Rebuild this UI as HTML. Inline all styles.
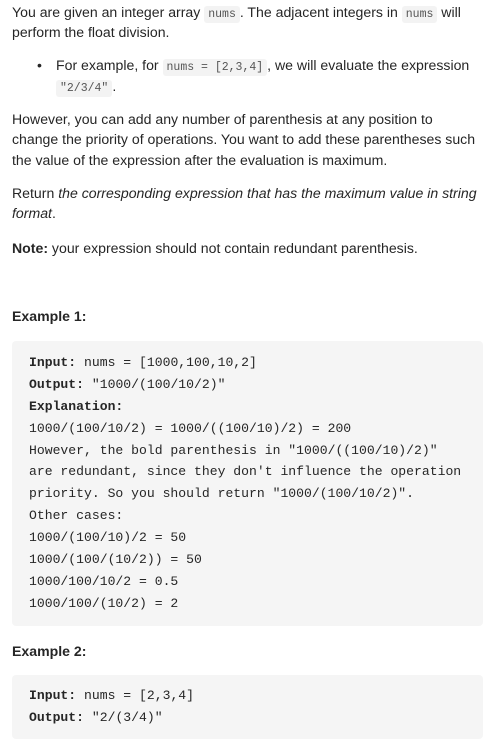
<!DOCTYPE html>
<html><head><meta charset="utf-8"><style>
body{margin:0;width:484px;height:740px;overflow:hidden;background:#fff;position:relative;font-family:"Liberation Sans",sans-serif;color:#262626;font-size:14.1px}
.l{position:absolute;white-space:nowrap;line-height:20px}
code{font-family:"Liberation Mono",monospace;font-size:11.5px;background:#f3f3f3;border-radius:3px;padding:2px 4px;color:#555}
.blk{position:absolute;left:12px;width:471px;background:#f5f5f5;border-radius:4px}
.m{position:absolute;left:29px;white-space:nowrap;font-family:"Liberation Mono",monospace;font-size:13.1px;line-height:22px;color:#262626}
b{font-weight:bold}
</style></head><body>
<div class="l" style="left:12px;top:2px">You are given an integer array <code>nums</code>. The adjacent integers in <code>nums</code> will</div>
<div class="l" style="left:12px;top:22px">perform the float division.</div>
<div class="l" style="left:37px;top:55px">•</div>
<div class="l" style="left:56px;top:55px">For example, for <code>nums = [2,3,4]</code>, we will evaluate the expression</div>
<div class="l" style="left:56px;top:76px"><code>"2/3/4"</code>.</div>
<div class="l" style="left:12px;top:109px">However, you can add any number of parenthesis at any position to</div>
<div class="l" style="left:12px;top:129px">change the priority of operations. You want to add these parentheses such</div>
<div class="l" style="left:12px;top:150px">the value of the expression after the evaluation is maximum.</div>
<div class="l" style="left:12px;top:183px">Return <i>the corresponding expression that has the maximum value in string</i></div>
<div class="l" style="left:12px;top:203px"><i>format</i>.</div>
<div class="l" style="left:12px;top:238px"><b>Note:</b> your expression should not contain redundant parenthesis.</div>
<div class="l" style="left:12px;top:306px"><b>Example 1:</b></div>
<div class="blk" style="top:341px;height:285px"></div>
<div class="m" style="top:352px"><b>Input:</b> nums = [1000,100,10,2]</div>
<div class="m" style="top:374px"><b>Output:</b> "1000/(100/10/2)"</div>
<div class="m" style="top:396px"><b>Explanation:</b></div>
<div class="m" style="top:418px">1000/(100/10/2) = 1000/((100/10)/2) = 200</div>
<div class="m" style="top:440px">However, the bold parenthesis in "1000/((100/10)/2)"</div>
<div class="m" style="top:461px">are redundant, since they don't influence the operation</div>
<div class="m" style="top:483px">priority. So you should return "1000/(100/10/2)".</div>
<div class="m" style="top:505px">Other cases:</div>
<div class="m" style="top:527px">1000/(100/10)/2 = 50</div>
<div class="m" style="top:549px">1000/(100/(10/2)) = 50</div>
<div class="m" style="top:571px">1000/100/10/2 = 0.5</div>
<div class="m" style="top:593px">1000/100/(10/2) = 2</div>
<div class="l" style="left:12px;top:641px"><b>Example 2:</b></div>
<div class="blk" style="top:675px;height:64px"></div>
<div class="m" style="top:685px"><b>Input:</b> nums = [2,3,4]</div>
<div class="m" style="top:707px"><b>Output:</b> "2/(3/4)"</div>
</body></html>
